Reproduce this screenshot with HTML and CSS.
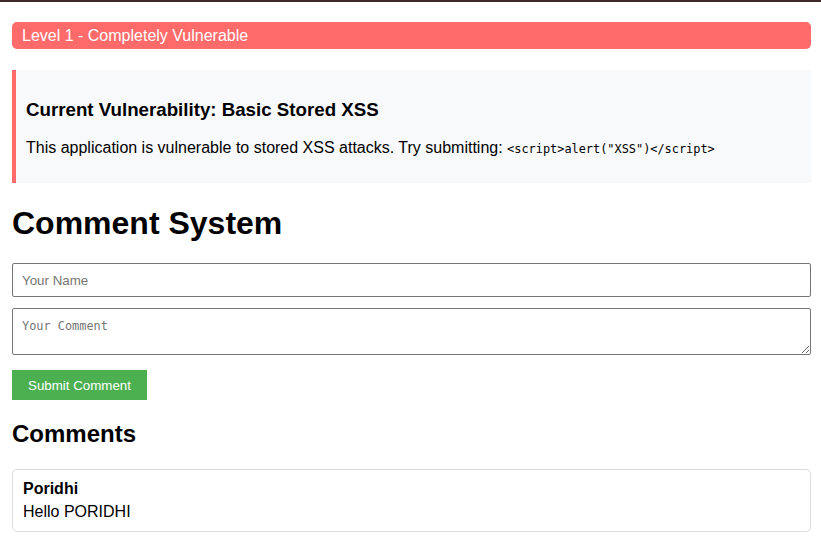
FILE: index.html
```html
<!DOCTYPE html>
<html>
<head>
<meta charset="utf-8">
<title>Comment System</title>
<link rel="stylesheet" href="styles.css">
</head>
<body>
<div class="topbar"></div>
<div class="page">
  <div class="level">Level 1 - Completely Vulnerable</div>
  <div class="vuln">
    <h3>Current Vulnerability: Basic Stored XSS</h3>
    <p>This application is vulnerable to stored XSS attacks. Try submitting: <code>&lt;script&gt;alert("XSS")&lt;/script&gt;</code></p>
  </div>
  <h1>Comment System</h1>
  <form class="form">
    <input class="name" type="text" placeholder="Your Name">
    <textarea class="comment" placeholder="Your Comment"></textarea>
    <button class="submit" type="button">Submit Comment</button>
  </form>
  <h2>Comments</h2>
  <div class="card">
    <div class="author">Poridhi</div>
    <div class="text">Hello PORIDHI</div>
  </div>
</div>
</body>
</html>
```
FILE: styles.css
```css
html, body {
  margin: 0;
  background: #fff;
}
body {
  font-family: "Liberation Sans", Arial, sans-serif;
  color: #000;
}
.topbar {
  height: 2px;
  background: #3d2b2b;
}
.page {
  padding: 20px 10px 0 12px;
}
.level {
  background: #ff6b6b;
  color: #fff;
  font-size: 16px;
  line-height: 17px;
  padding: 5px 10px;
  border-radius: 5px;
  margin-bottom: 21px;
}
.vuln {
  background: #f8f9fa;
  border-left: 4px solid #ff6b6b;
  padding: 10px;
}
.vuln h3 {
  font-size: 18.72px;
  margin: 18.72px 0;
}
.vuln p {
  font-size: 16px;
  margin: 16px 0 16px;
}
.vuln code {
  font-family: "DejaVu Sans Mono", monospace;
  font-size: 11.9px;
}
h1 {
  font-size: 32px;
  margin: 21.44px 0;
}
.form {
  display: flex;
  flex-direction: column;
  align-items: flex-start;
}
.name, .comment {
  box-sizing: border-box;
  width: 100%;
  border: 1px solid #767676;
  border-radius: 2px;
  padding: 8px 9px;
  margin: 0;
  color: #000;
}
.name {
  font-family: "Liberation Sans", Arial, sans-serif;
  font-size: 13.33px;
  height: 34px;
  margin-bottom: 11px;
}
.comment {
  font-family: "DejaVu Sans Mono", monospace;
  font-size: 11.9px;
  height: 47px;
  margin-bottom: 15px;
  padding-top: 10px;
}
.name::placeholder, .comment::placeholder {
  color: #757575;
}
.submit {
  background: #4caf50;
  color: #fff;
  border: none;
  font-family: "Liberation Sans", Arial, sans-serif;
  font-size: 13.33px;
  padding: 0 16px;
  height: 30px;
  cursor: pointer;
}
h2 {
  font-size: 24px;
  margin: 20px 0 21px;
}
.card {
  border: 1px solid #ddd;
  border-radius: 5px;
  padding: 10px;
  font-size: 16px;
}
.author {
  font-weight: bold;
  margin-bottom: 5px;
}
```
